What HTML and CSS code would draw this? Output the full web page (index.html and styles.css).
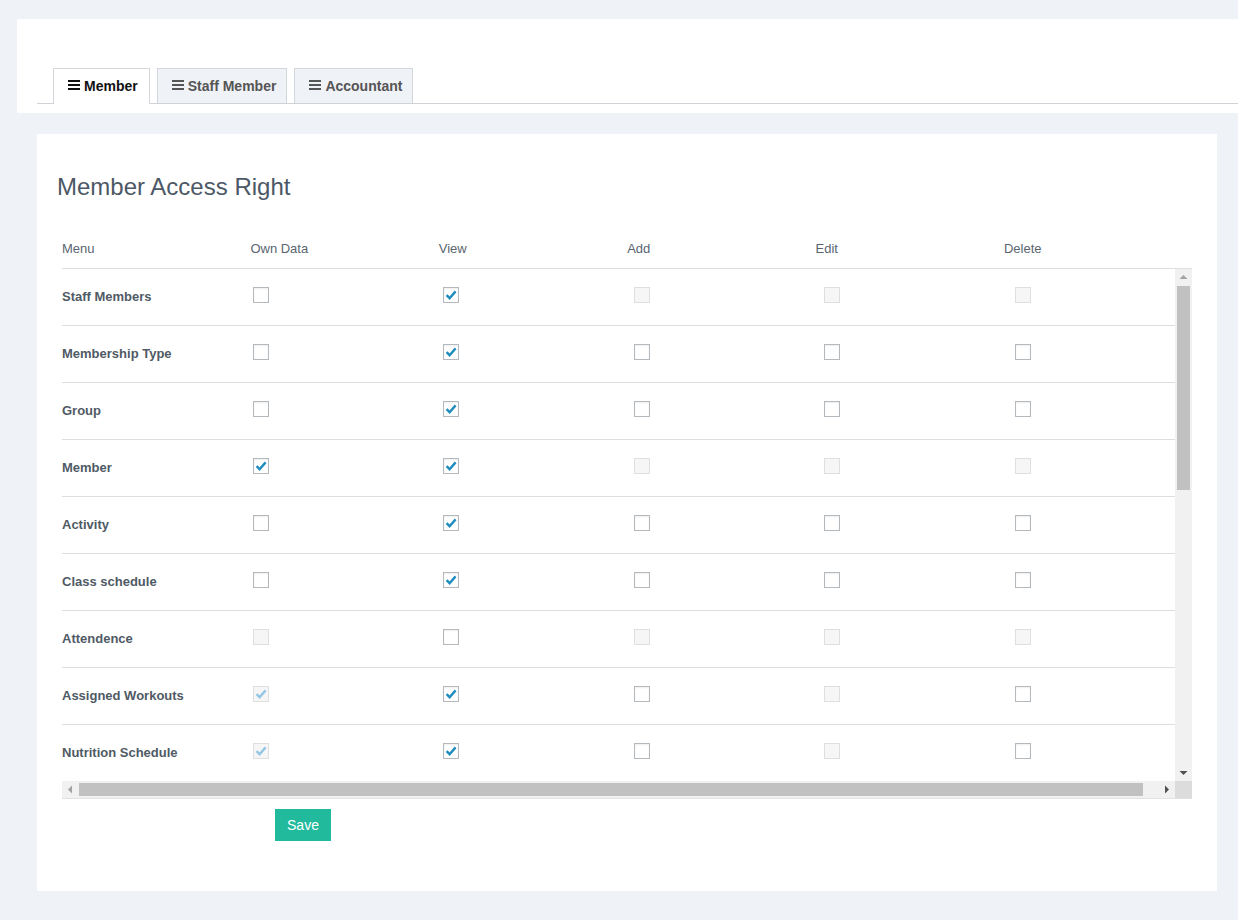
FILE: index.html
```html
<!DOCTYPE html>
<html>
<head>
<meta charset="utf-8">
<title>Access Right</title>
<link rel="stylesheet" href="styles.css">
</head>
<body>
<div class="topbar">
  <ul class="tabs">
    <li class="tab active"><svg class="ico" width="12" height="10" viewBox="0 0 12 10"><rect x="0" y="0" width="12" height="2"/><rect x="0" y="4" width="12" height="2"/><rect x="0" y="8" width="12" height="2"/></svg>Member</li>
    <li class="tab"><svg class="ico" width="12" height="10" viewBox="0 0 12 10"><rect x="0" y="0" width="12" height="2"/><rect x="0" y="4" width="12" height="2"/><rect x="0" y="8" width="12" height="2"/></svg>Staff Member</li>
    <li class="tab"><svg class="ico" width="12" height="10" viewBox="0 0 12 10"><rect x="0" y="0" width="12" height="2"/><rect x="0" y="4" width="12" height="2"/><rect x="0" y="8" width="12" height="2"/></svg>Accountant</li>
  </ul>
</div>

<div class="card">
  <h2 class="title">Member Access Right</h2>
  <div class="table">
    <div class="thead">
      <div>Menu</div><div>Own Data</div><div>View</div><div>Add</div><div>Edit</div><div>Delete</div>
    </div>
    <div class="scrollbox">
      <div class="viewport">
        <div class="tbody">
          <div class="row"><div class="label">Staff Members</div><div><input type="checkbox" class="cb"></div><div><input type="checkbox" class="cb" checked></div><div><input type="checkbox" class="cb" disabled></div><div><input type="checkbox" class="cb" disabled></div><div><input type="checkbox" class="cb" disabled></div></div>
          <div class="row"><div class="label">Membership Type</div><div><input type="checkbox" class="cb"></div><div><input type="checkbox" class="cb" checked></div><div><input type="checkbox" class="cb"></div><div><input type="checkbox" class="cb"></div><div><input type="checkbox" class="cb"></div></div>
          <div class="row"><div class="label">Group</div><div><input type="checkbox" class="cb"></div><div><input type="checkbox" class="cb" checked></div><div><input type="checkbox" class="cb"></div><div><input type="checkbox" class="cb"></div><div><input type="checkbox" class="cb"></div></div>
          <div class="row"><div class="label">Member</div><div><input type="checkbox" class="cb" checked></div><div><input type="checkbox" class="cb" checked></div><div><input type="checkbox" class="cb" disabled></div><div><input type="checkbox" class="cb" disabled></div><div><input type="checkbox" class="cb" disabled></div></div>
          <div class="row"><div class="label">Activity</div><div><input type="checkbox" class="cb"></div><div><input type="checkbox" class="cb" checked></div><div><input type="checkbox" class="cb"></div><div><input type="checkbox" class="cb"></div><div><input type="checkbox" class="cb"></div></div>
          <div class="row"><div class="label">Class schedule</div><div><input type="checkbox" class="cb"></div><div><input type="checkbox" class="cb" checked></div><div><input type="checkbox" class="cb"></div><div><input type="checkbox" class="cb"></div><div><input type="checkbox" class="cb"></div></div>
          <div class="row"><div class="label">Attendence</div><div><input type="checkbox" class="cb" disabled></div><div><input type="checkbox" class="cb"></div><div><input type="checkbox" class="cb" disabled></div><div><input type="checkbox" class="cb" disabled></div><div><input type="checkbox" class="cb" disabled></div></div>
          <div class="row"><div class="label">Assigned Workouts</div><div><input type="checkbox" class="cb" checked disabled></div><div><input type="checkbox" class="cb" checked></div><div><input type="checkbox" class="cb"></div><div><input type="checkbox" class="cb" disabled></div><div><input type="checkbox" class="cb"></div></div>
          <div class="row"><div class="label">Nutrition Schedule</div><div><input type="checkbox" class="cb" checked disabled></div><div><input type="checkbox" class="cb" checked></div><div><input type="checkbox" class="cb"></div><div><input type="checkbox" class="cb" disabled></div><div><input type="checkbox" class="cb"></div></div>
        </div>
      </div>
      <div class="vbar">
        <div class="sbtn"><svg width="17" height="17"><path d="M4.5 10 L12.5 10 L8.5 6 Z" fill="#a3a3a3"/></svg></div>
        <div class="vtrack"><div class="vthumb"></div></div>
        <div class="sbtn"><svg width="17" height="17"><path d="M4.5 7 L12.5 7 L8.5 11 Z" fill="#505050"/></svg></div>
      </div>
      <div class="hbar">
        <div class="sbtn"><svg width="17" height="17"><path d="M10 4.5 L10 12.5 L6 8.5 Z" fill="#a3a3a3"/></svg></div>
        <div class="htrack"><div class="hthumb"></div></div>
        <div class="sbtn"><svg width="17" height="17"><path d="M7 4.5 L7 12.5 L11 8.5 Z" fill="#505050"/></svg></div>
      </div>
      <div class="corner"></div>
    </div>
    <div class="actions"><button class="btn" type="button">Save</button></div>
  </div>
</div>
</body>
</html>
```

FILE: styles.css
```css
html, body {
  margin: 0;
  padding: 0;
}
body {
  background: #eff2f7;
  font-family: "Liberation Sans", Arial, sans-serif;
  color: #4f5a65;
  padding-top: 19px;
  padding-bottom: 29px;
}

/* top tab panel */
.topbar {
  margin-left: 17px;
  background: #fff;
  height: 94px;
  padding-left: 20px;
  box-sizing: border-box;
  padding-top: 49px;
}
.tabs {
  list-style: none;
  margin: 0;
  padding: 0 0 0 16px;
  display: flex;
  gap: 7px;
  border-bottom: 1px solid #cfd2d6;
  height: 35px;
}
.tab {
  display: flex;
  align-items: center;
  height: 35px;
  box-sizing: border-box;
  padding: 0 10px 0 14px;
  border: 1px solid #d3d6da;
  border-bottom: none;
  background: #eff2f7;
  font-weight: bold;
  font-size: 14px;
  color: #555;
}
.tab.active {
  background: #fff;
  color: #111;
  height: 36px;
  padding-right: 11px;
  padding-bottom: 1px;
}
.ico {
  fill: #555;
  margin-right: 4px;
  margin-top: -3px;
}
.tab.active .ico { fill: #111; }

/* card */
.card {
  background: #fff;
  margin: 21px 21px 0 37px;
  padding: 39px 25px 50px 20px;
}
.title {
  margin: 0;
  font-size: 24px;
  line-height: 28px;
  font-weight: normal;
  color: #4c5866;
}
.table {
  margin-left: 5px;
}
.thead {
  margin-top: 29px;
  height: 39px;
  padding-bottom: 1px;
  box-sizing: border-box;
  display: grid;
  grid-template-columns: 188.4px 188.4px 188.4px 188.4px 188.4px auto;
  align-items: center;
  border-bottom: 1px solid #dcdfe2;
  font-size: 13px;
  color: #5a6570;
}

/* scroll area with drawn scrollbars */
.scrollbox {
  display: grid;
  grid-template-columns: 1fr 17px;
  grid-template-rows: 512px 17px;
  border-bottom: 1px solid #e2e2e2;
}
.viewport {
  overflow: hidden;
}
.tbody {
  width: 1129px;
}
.row {
  display: grid;
  grid-template-columns: 191px 190px 190.5px 190.5px 190.5px 176px;
  height: 57px;
  box-sizing: border-box;
  border-bottom: 1px solid #dcdfe2;
}
.label {
  font-size: 13px;
  font-weight: bold;
  color: #4f5a65;
  line-height: 56px;
}
.cb {
  -webkit-appearance: none;
  appearance: none;
  display: block;
  width: 16px;
  height: 16px;
  margin: 18px 0 0 0;
  box-sizing: border-box;
  border: 1px solid #b4b9be;
  background-color: #fff;
  box-shadow: inset 0 1px 2px rgba(0,0,0,0.07);
  background-repeat: no-repeat;
  background-position: center;
}
.cb:checked {
  background-image: url("data:image/svg+xml;utf8,<svg xmlns='http://www.w3.org/2000/svg' width='14' height='14' viewBox='0 0 14 14'><path d='M2.6 7.2 L5.6 10.2 L11.6 3.4' fill='none' stroke='%231e8cbe' stroke-width='2.4'/></svg>");
}
.cb:disabled {
  border-color: #dfdfdf;
  background-color: #f6f6f6;
  box-shadow: none;
}
.cb:disabled:checked {
  background-image: url("data:image/svg+xml;utf8,<svg xmlns='http://www.w3.org/2000/svg' width='14' height='14' viewBox='0 0 14 14'><path d='M2.6 7.2 L5.6 10.2 L11.6 3.4' fill='none' stroke='%2394c7e4' stroke-width='2.4'/></svg>");
}

.vbar {
  display: flex;
  flex-direction: column;
  background: #f1f1f1;
}
.hbar {
  display: flex;
  background: #f1f1f1;
}
.sbtn {
  width: 17px;
  height: 17px;
  flex: none;
}
.sbtn svg { display: block; }
.vtrack {
  flex: 1;
}
.vthumb {
  margin-left: 2px;
  width: 13px;
  height: 204px;
  background: #c1c1c1;
}
.htrack {
  flex: 1;
  padding-top: 2px;
}
.hthumb {
  width: 1064px;
  height: 13px;
  background: #c1c1c1;
}
.corner {
  background: #dcdcdc;
}

.actions {
  padding: 10px 0 0 213px;
}
.btn {
  display: block;
  width: 56px;
  height: 32px;
  border: none;
  background: #22ba9d;
  color: #fff;
  font-family: "Liberation Sans", Arial, sans-serif;
  font-size: 14px;
  padding: 0;
}
```
